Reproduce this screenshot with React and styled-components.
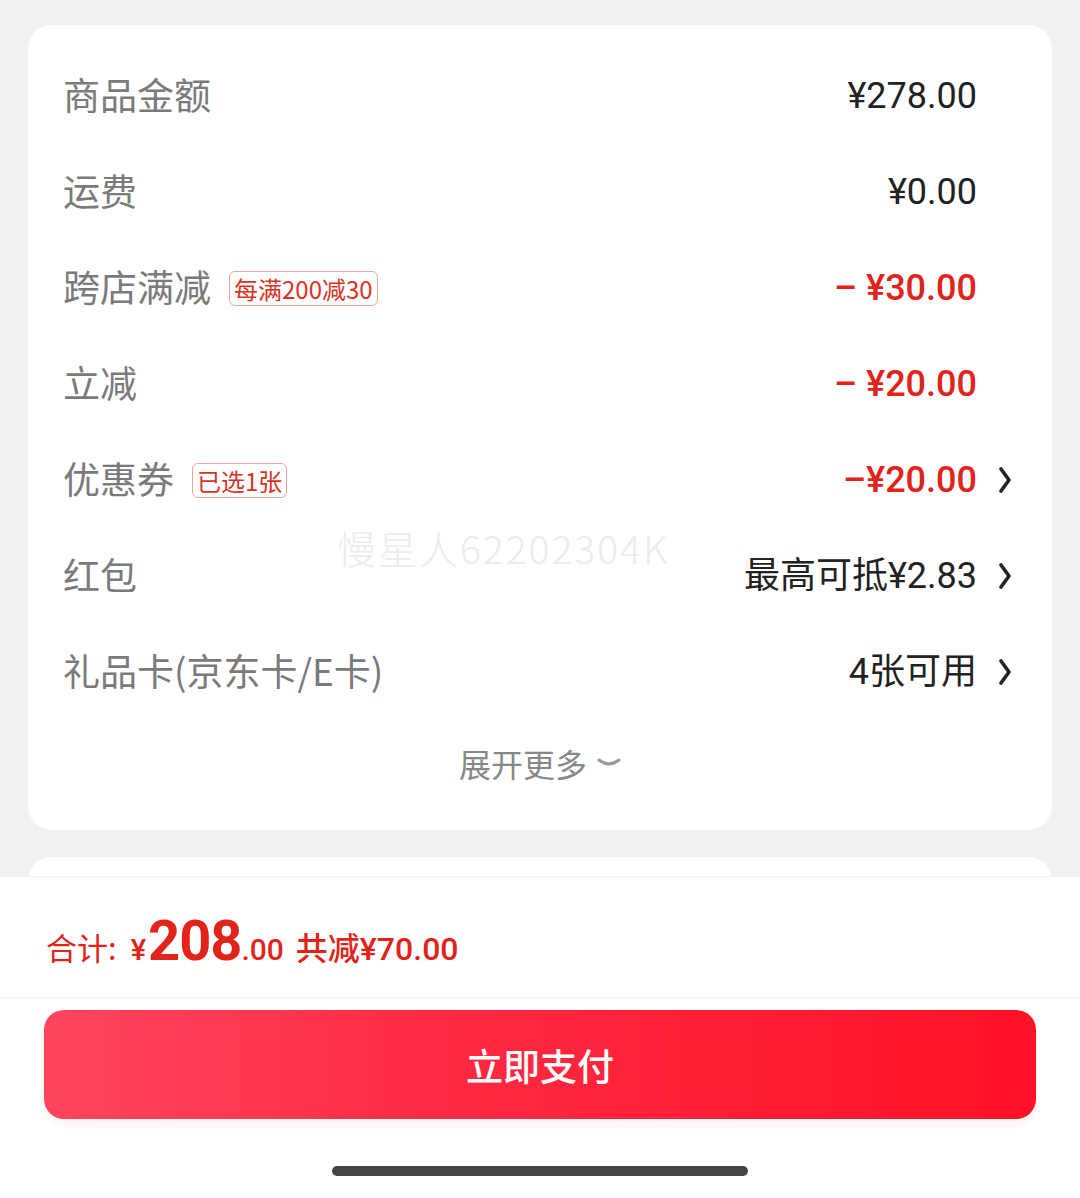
import React from 'react'
import styled, { createGlobalStyle } from 'styled-components'

const GlobalStyle = createGlobalStyle`
  html, body {
    margin: 0;
    padding: 0;
    background: #f2f2f2;
    font-family: Roboto, "Noto Sans CJK SC", sans-serif;
  }
`

const Page = styled.div`
  min-height: 1198px;
  padding: 25px 28px 0;
  box-sizing: border-box;
`

const Card = styled.div`
  position: relative;
  background: #fff;
  border-radius: 24px;
  padding: 23px 0 24px;
`

const NextCard = styled.div`
  margin-top: 27px;
  height: 200px;
  background: #fff;
  border-radius: 24px;
`

const Row = styled.div`
  height: 96px;
  display: flex;
  align-items: center;
  justify-content: space-between;
  padding: 0 41px 0 35px;
`

const Left = styled.div`
  display: flex;
  align-items: center;
`

const Label = styled.span`
  font-family: "Noto Sans CJK SC", sans-serif;
  font-size: 37px;
  color: #7a7a7a;
  line-height: 1;
  padding-bottom: 3px;
`

const Tag = styled.span`
  margin-left: 18px;
  height: 33px;
  display: inline-flex;
  align-items: center;
  padding: 0 4px;
  border: 1px solid #eba59e;
  border-radius: 6px;
  font-family: "Noto Sans CJK SC", sans-serif;
  font-size: 24px;
  color: #d9331f;
`

const Right = styled.div`
  display: flex;
  align-items: center;
`

const Value = styled.span`
  font-family: Roboto, "Noto Sans CJK SC", sans-serif;
  font-size: 36px;
  font-weight: ${p => (p.red ? 500 : 400)};
  line-height: 1;
  white-space: pre;
  color: ${p => (p.red ? '#e2231a' : '#222')};
`

const Slot = styled.span`
  width: 34px;
  display: flex;
  justify-content: flex-end;
`

const More = styled.div`
  height: 86px;
  display: flex;
  align-items: center;
  justify-content: center;
  gap: 10px;
  font-family: "Noto Sans CJK SC", sans-serif;
  font-size: 32px;
  color: #888;
`

const Watermark = styled.div`
  position: absolute;
  left: 309px;
  top: 494px;
  font-family: "Noto Sans CJK SC", sans-serif;
  font-size: 39px;
  letter-spacing: 2px;
  font-weight: 300;
  color: #ececec;
  pointer-events: none;
`

const Bottom = styled.div`
  position: fixed;
  left: 0;
  right: 0;
  bottom: 0;
  height: 322px;
  background: #fff;
  border-top: 1px solid #efefef;
  box-sizing: border-box;
  display: flex;
  flex-direction: column;
`

const Total = styled.div`
  height: 121px;
  display: flex;
  align-items: baseline;
  padding: 36px 46px 0;
  box-sizing: border-box;
  border-bottom: 1px solid #f0f0f0;
  color: #e2231a;
  font-family: Roboto, "Noto Sans CJK SC", sans-serif;
`

const TotalLabel = styled.span`
  font-family: "Noto Sans CJK SC", sans-serif;
  font-size: 31px;
  margin-right: 14px;
`

const Yen = styled.span`
  font-size: 29px;
  font-weight: 500;
  margin-right: 2px;
`

const Big = styled.span`
  font-size: 56px;
  font-weight: 700;
  line-height: 1;
  letter-spacing: -1px;
`

const Cents = styled.span`
  font-size: 30px;
  font-weight: 500;
  margin-right: 12px;
`

const Saved = styled.span`
  font-size: 32px;
  font-weight: 500;
`

const PayButton = styled.button`
  margin: 12px 44px 0;
  height: 109px;
  border: none;
  border-radius: 20px;
  background: linear-gradient(90deg, #ff465d 0%, #ff2a43 40%, #ff1226 100%);
  box-shadow: 0 6px 10px rgba(255, 40, 60, 0.06);
  color: #fff;
  font-family: "Noto Sans CJK SC", sans-serif;
  font-size: 37px;
  font-weight: 500;
`

const HomeBar = styled.div`
  margin: 47px auto 0;
  width: 416px;
  height: 10px;
  border-radius: 5px;
  background: #444;
`

const Chevron = () => (
  <svg width="12" height="26" viewBox="0 0 12 26">
    <path d="M2 2 L10 13 L2 24" fill="none" stroke="#222" strokeWidth="3.6" strokeLinecap="round" strokeLinejoin="round" />
  </svg>
)

const ChevronDown = () => (
  <svg width="24" height="12" viewBox="0 0 24 12">
    <path d="M2 3 Q12 11 22 3" fill="none" stroke="#999" strokeWidth="3" strokeLinecap="round" />
  </svg>
)

const rows = [
  { label: '商品金额', value: '¥278.00' },
  { label: '运费', value: '¥0.00' },
  { label: '跨店满减', tag: '每满200减30', value: '– ¥30.00', red: true },
  { label: '立减', value: '– ¥20.00', red: true },
  { label: '优惠券', tag: '已选1张', value: '–¥20.00', red: true, arrow: true },
  { label: '红包', value: '最高可抵¥2.83', arrow: true },
  { label: '礼品卡(京东卡/E卡)', value: '4张可用', arrow: true }
]

export default function App () {
  return (
    <>
      <GlobalStyle />
      <Page>
        <Card>
          {rows.map((item, index) => (
            <Row key={index}>
              <Left>
                <Label>{item.label}</Label>
                {item.tag && <Tag>{item.tag}</Tag>}
              </Left>
              <Right>
                <Value red={item.red}>{item.value}</Value>
                <Slot>{item.arrow && <Chevron />}</Slot>
              </Right>
            </Row>
          ))}
          <More>展开更多<ChevronDown /></More>
          <Watermark>慢星人62202304K</Watermark>
        </Card>
        <NextCard />
      </Page>
      <Bottom>
        <Total>
          <TotalLabel>合计:</TotalLabel>
          <Yen>¥</Yen>
          <Big>208</Big>
          <Cents>.00</Cents>
          <Saved>共减¥70.00</Saved>
        </Total>
        <PayButton>立即支付</PayButton>
        <HomeBar />
      </Bottom>
    </>
  )
}
